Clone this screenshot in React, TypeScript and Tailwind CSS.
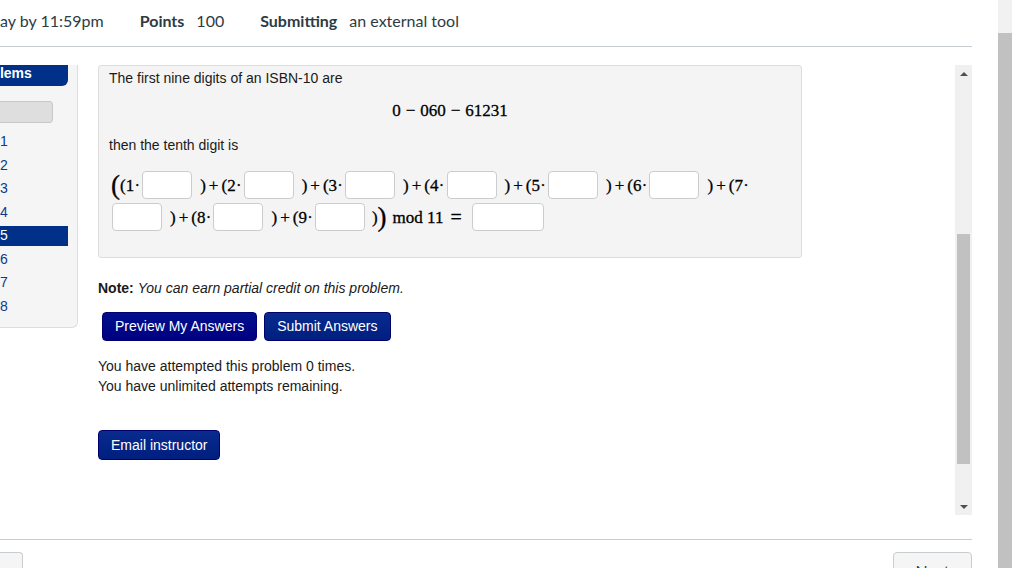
import type { ReactNode } from "react";

const lato = { fontFamily: "Lato, 'Open Sans', sans-serif" };
const arial = { fontFamily: "'Liberation Sans', Arial, sans-serif" };
const serif = { fontFamily: "'Liberation Serif', 'Times New Roman', serif" };

// one answer blank in the formula
function Blank({ wide = false, className = "" }: { wide?: boolean; className?: string }) {
  return (
    <span
      className={`inline-block h-[28px] ${wide ? "w-[72px]" : "w-[50px]"} rounded-[4px] border border-[#cccccc] bg-white ${className}`}
    />
  );
}

// ")+(n·" between blanks
function Term({ n, className = "" }: { n: number; className?: string }) {
  return (
    <span
      className={`inline-flex items-center text-[17px] leading-none text-black [-webkit-text-stroke:0.3px_black] ${className}`}
      style={serif}
    >
      <span>)</span>
      <span className="mx-[3px]">+</span>
      <span>(</span>
      <span>{n}</span>
      <span className="ml-[1px] text-[12px] font-bold">·</span>
    </span>
  );
}

function MathRow({ children }: { children: ReactNode }) {
  return <div className="flex h-[28px] items-center">{children}</div>;
}

function ProblemList() {
  const items = [1, 2, 3, 4, 5, 6, 7, 8];
  return (
    <div className="w-[78px] shrink-0 rounded-br-[6px] border-r border-b border-[#dddddd] bg-[#f5f5f5] pb-[9px]" style={arial}>
      <div className="mr-[9px] h-[21px] overflow-hidden rounded-br-[6px] bg-[#003087]">
        <span className="-ml-[32px] block text-[14px] font-bold leading-[16px] text-white">Problems</span>
      </div>
      <div className="mt-[15px] mr-[24px] h-[22px] rounded-r-[4px] border border-l-0 border-[#c8c8c8] bg-[#dedede]" />
      <div className="mt-[7px]">
        {items.map((n) => (
          <div key={n} className="flex h-[23.5px] items-center">
            <span
              className={`flex h-[20px] w-[68px] items-center text-[14px] ${
                n === 5 ? "bg-[#003087] text-white" : "text-[#0b3a8c]"
              }`}
            >
              {n}
            </span>
          </div>
        ))}
      </div>
    </div>
  );
}

function Problem() {
  return (
    <div className="ml-[20px] w-[704px] text-[14px] text-[#1a1a1a]" style={arial}>
      <div className="h-[193px] rounded-[3px] border border-[#dddddd] bg-[#f4f4f4] px-[10px] pt-[4px]">
        <p className="leading-[17px]">The first nine digits of an ISBN-10 are</p>
        <div
          className="mt-[14px] flex h-[20px] items-center justify-center text-[17px] text-black [-webkit-text-stroke:0.3px_black]"
          style={serif}
        >
          <span>0</span>
          <span className="mx-[5px]">−</span>
          <span>060</span>
          <span className="mx-[5px]">−</span>
          <span>61231</span>
        </div>
        <p className="mt-[16px] leading-[17px]">then the tenth digit is</p>
        <div className="mt-[17px]">
          <MathRow>
            <span className="ml-[2px] flex items-center text-black [-webkit-text-stroke:0.3px_black]" style={serif}>
              <span className="text-[27px] leading-none">(</span>
              <span className="text-[17px] leading-none">(1</span>
              <span className="ml-[1px] text-[12px] font-bold leading-none">·</span>
            </span>
            <Blank className="ml-[3px]" />
            <Term n={2} className="ml-[8px]" />
            <Blank className="ml-[3px]" />
            <Term n={3} className="ml-[8px]" />
            <Blank className="ml-[3px]" />
            <Term n={4} className="ml-[8px]" />
            <Blank className="ml-[3px]" />
            <Term n={5} className="ml-[8px]" />
            <Blank className="ml-[3px]" />
            <Term n={6} className="ml-[8px]" />
            <Blank className="ml-[3px]" />
            <Term n={7} className="ml-[8px]" />
          </MathRow>
          <div className="mt-[4px]">
            <MathRow>
              <Blank className="ml-[3px]" />
              <Term n={8} className="ml-[8px]" />
              <Blank className="ml-[3px]" />
              <Term n={9} className="ml-[8px]" />
              <Blank className="ml-[3px]" />
              <span className="ml-[7px] flex items-center text-black [-webkit-text-stroke:0.3px_black]" style={serif}>
                <span className="text-[17px] leading-none">)</span>
                <span className="text-[27px] leading-none">)</span>
                <span className="ml-[6px] text-[17px] leading-none">mod 11</span>
                <span className="ml-[7px] text-[20px] leading-none">=</span>
              </span>
              <Blank wide className="ml-[10px]" />
            </MathRow>
          </div>
        </div>
      </div>

      <p className="mt-[22px] leading-[16px]">
        <b>Note:</b> <i>You can earn partial credit on this problem.</i>
      </p>

      <div className="mt-[16px] ml-[4px] flex gap-[7px]">
        <button className="h-[29px] rounded-[4px] border border-[#00006e] bg-gradient-to-b from-[#00108e] to-[#000080] px-[12px] text-[14px] text-white">
          Preview My Answers
        </button>
        <button className="h-[29px] rounded-[4px] border border-[#00006e] bg-gradient-to-b from-[#0a2b8e] to-[#001f80] px-[12px] text-[14px] text-white">
          Submit Answers
        </button>
      </div>

      <div className="mt-[15px] leading-[20px]">
        <p>You have attempted this problem 0 times.</p>
        <p>You have unlimited attempts remaining.</p>
      </div>

      <button className="mt-[34px] h-[30px] rounded-[4px] border border-[#00006e] bg-gradient-to-b from-[#0a2b8e] to-[#001f80] px-[12px] text-[14px] text-white">
        Email instructor
      </button>
    </div>
  );
}

function InnerScrollbar() {
  return (
    <div className="flex w-[17px] shrink-0 flex-col bg-[#f0f0f0]">
      <div className="flex h-[17px] items-center justify-center">
        <span className="h-0 w-0 border-x-[4px] border-b-[4px] border-x-transparent border-b-[#505050]" />
      </div>
      <div className="mx-[2px] mt-[152px] h-[230px] bg-[#c1c1c1]" />
      <div className="mt-auto flex h-[17px] items-center justify-center">
        <span className="h-0 w-0 border-x-[4px] border-t-[4px] border-x-transparent border-t-[#505050]" />
      </div>
    </div>
  );
}

export default function App() {
  return (
    <div className="flex h-[568px] w-[1012px] overflow-hidden bg-white">
      <div className="w-[998px] shrink-0">
        <div
          className="flex h-[47px] w-[972px] items-start border-b border-[#c7cdd1] pt-[11px] text-[16px] leading-[20px] text-[#2d3b45]"
          style={lato}
        >
          <span>ay by 11:59pm</span>
          <span className="ml-[36px] font-bold">Points</span>
          <span className="ml-[12px]">100</span>
          <span className="ml-[36px] font-bold">Submitting</span>
          <span className="ml-[12px]">an external tool</span>
        </div>

        <div className="mt-[18px] flex h-[450px] w-[972px] overflow-hidden">
          <div className="flex w-[955px] items-start overflow-hidden">
            <ProblemList />
            <Problem />
          </div>
          <InnerScrollbar />
        </div>

        <div className="mt-[24px] h-px w-[972px] bg-[#c7cdd1]" />

        <div className="mt-[12px] flex w-[972px] justify-between" style={lato}>
          <div className="h-[38px] w-[23px] rounded-tr-[4px] border-t border-r border-[#c7cdd1] bg-[#f5f5f5]" />
          <div className="flex h-[38px] w-[79px] items-center justify-center rounded-[4px] border border-[#c7cdd1] bg-[#f5f5f5] text-[16px] text-[#2d3b45]">
            Next
          </div>
        </div>
      </div>

      <div className="flex w-[14px] shrink-0 flex-col bg-[#f1f1f1]">
        <div className="mt-[33px] flex-1 bg-[#c1c1c1]" />
      </div>
    </div>
  );
}
